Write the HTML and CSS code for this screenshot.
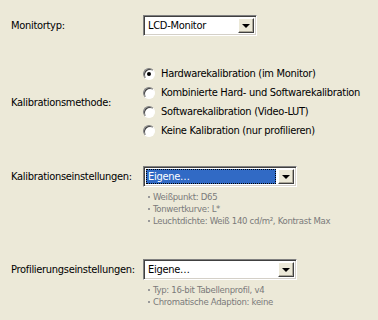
FILE: index.html
```html
<!DOCTYPE html>
<html lang="de">
<head>
    <meta charset="UTF-8">
    <title>Kalibration</title>
    <link rel="stylesheet" href="styles.css">
</head>
<body>
    <div class="panel">
        <div class="field">
            <label class="field-label">Monitortyp:</label>
            <div class="combo combo-short">
                <span class="combo-text">LCD-Monitor</span>
                <span class="combo-btn"><span class="arrow"></span></span>
            </div>
        </div>

        <div class="field field-radios">
            <label class="field-label">Kalibrationsmethode:</label>
            <div class="radio-list">
                <div class="radio-row"><span class="radio checked"></span>Hardwarekalibration (im Monitor)</div>
                <div class="radio-row"><span class="radio"></span>Kombinierte Hard- und Softwarekalibration</div>
                <div class="radio-row"><span class="radio"></span>Softwarekalibration (Video-LUT)</div>
                <div class="radio-row"><span class="radio"></span>Keine Kalibration (nur profilieren)</div>
            </div>
        </div>

        <div class="field field-cal">
            <label class="field-label">Kalibrationseinstellungen:</label>
            <div class="combo">
                <span class="combo-text selected">Eigene…</span>
                <span class="combo-btn"><span class="arrow"></span></span>
            </div>
            <ul class="notes">
                <li>Weißpunkt: D65</li>
                <li>Tonwertkurve: L*</li>
                <li>Leuchtdichte: Weiß 140 cd/m², Kontrast Max</li>
            </ul>
        </div>

        <div class="field field-prof">
            <label class="field-label">Profilierungseinstellungen:</label>
            <div class="combo">
                <span class="combo-text">Eigene…</span>
                <span class="combo-btn"><span class="arrow"></span></span>
            </div>
            <ul class="notes">
                <li>Typ: 16-bit Tabellenprofil, v4</li>
                <li>Chromatische Adaption: keine</li>
            </ul>
        </div>
    </div>
</body>
</html>
```

FILE: styles.css
```css
body {
    margin: 0;
    padding: 0;
    background-color: #ece9d8;
    font-family: "DejaVu Sans Condensed", "Liberation Sans", Arial, sans-serif;
    font-size: 11px;
    letter-spacing: -0.3px;
    color: #000;
}

.panel {
    padding: 15px 0 0 11px;
}

.field {
    display: grid;
    grid-template-columns: 132px auto;
    align-items: center;
    justify-content: start;
}

.field-radios {
    margin-top: 28px;
}

.field-cal {
    margin-top: 26px;
}

.field-prof {
    margin-top: 32px;
}

.field-label {
    grid-column: 1;
    grid-row: 1;
}

/* combo box, classic windows look */
.combo {
    box-sizing: border-box;
    width: 154px;
    height: 21px;
    display: flex;
    align-items: center;
    background-color: #fff;
    border: 1px solid;
    border-color: #808080 #fff #fff #808080;
    box-shadow: inset 1px 1px 0 #404040, inset -1px -1px 0 #d4d0c8;
    padding: 2px;
}

.combo-short {
    width: 114px;
}

.combo-text {
    flex: 1;
    height: 15px;
    line-height: 15px;
    padding-left: 2px;
    white-space: nowrap;
}

.combo-text.selected {
    background-color: #316ac5;
    color: #fff;
    outline: 1px dotted #000;
    outline-offset: -1px;
}

.combo-btn {
    box-sizing: border-box;
    width: 16px;
    height: 15px;
    margin-left: 2px;
    display: flex;
    align-items: center;
    justify-content: center;
    background-color: #ece9d8;
    border: 1px solid;
    border-color: #fff #404040 #404040 #fff;
    box-shadow: inset -1px -1px 0 #aca899;
}

.arrow {
    width: 0;
    height: 0;
    border-left: 4px solid transparent;
    border-right: 4px solid transparent;
    border-top: 4px solid #000;
}

.radio-list {
    display: flex;
    flex-direction: column;
}

.radio-row {
    height: 19px;
    display: flex;
    align-items: center;
    white-space: nowrap;
}

.radio {
    box-sizing: border-box;
    width: 12px;
    height: 12px;
    margin-right: 6px;
    border-radius: 50%;
    border: 1px solid;
    border-color: #808080 #fff #fff #808080;
    background-color: #fff;
    box-shadow: inset 1px 1px 0 #404040;
    display: flex;
    align-items: center;
    justify-content: center;
}

.radio.checked::after {
    content: "";
    width: 4px;
    height: 4px;
    border-radius: 50%;
    background-color: #000;
}

.notes {
    grid-column: 2;
    grid-row: 2;
    list-style: none;
    margin: 4px 0 0 0;
    padding: 0 0 0 5px;
    font-size: 9.5px;
    letter-spacing: -0.3px;
    line-height: 12px;
    color: #7a7a7a;
}

.notes li::before {
    content: "";
    display: inline-block;
    width: 2px;
    height: 2px;
    margin-right: 3px;
    vertical-align: 2px;
    background-color: #9a9a9a;
}
```
